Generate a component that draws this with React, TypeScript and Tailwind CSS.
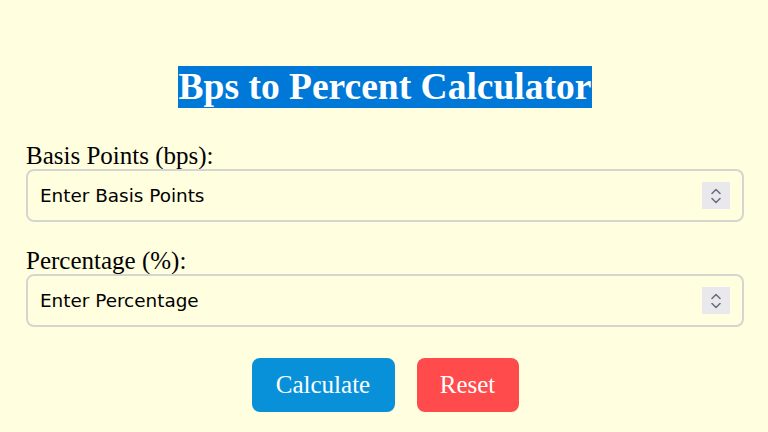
import React from 'react';

const Spinner = () => (
    <div className="w-[28px] h-[27px] bg-[#e9e9ed] flex items-center justify-center shrink-0">
        <svg width="14" height="20" viewBox="0 0 14 20" fill="none" stroke="#6e6e80" strokeWidth="1.6" strokeLinecap="round" strokeLinejoin="round">
            <path d="M3 7.5 L7 3.5 L11 7.5" />
            <path d="M3 12.5 L7 16.5 L11 12.5" />
        </svg>
    </div>
);

const Field = ({ label, placeholder }: { label: string; placeholder: string }) => (
    <div className="flex flex-col">
        <label className="text-[25px] leading-[27px] text-black">{label}</label>
        <div className="flex items-center h-[53px] border-2 border-[#d6d6d0] rounded-[8px] pl-[12px] pr-[12px]">
            <input
                type="text"
                placeholder={placeholder}
                className="flex-1 bg-transparent outline-none text-[18.4px] placeholder:text-black"
                style={{ fontFamily: 'Tahoma, "DejaVu Sans", sans-serif' }}
            />
            <Spinner />
        </div>
    </div>
);

export default function App() {
    return (
        <div className="w-[768px] h-[432px] bg-[#ffffe0] overflow-hidden" style={{ fontFamily: '"Liberation Serif", serif' }}>
            <div className="pl-[26px] pr-[24px] pt-[66px]">
                <div className="flex justify-center">
                    <h1 className="text-[37.5px] font-bold leading-[42px] text-white bg-[#0078d7] px-[1px]">
                        Bps to Percent Calculator
                    </h1>
                </div>
                <div className="mt-[34px] flex flex-col gap-[25px]">
                    <Field label="Basis Points (bps):" placeholder="Enter Basis Points" />
                    <Field label="Percentage (%):" placeholder="Enter Percentage" />
                </div>
                <div className="mt-[31px] flex justify-center gap-[22px]">
                    <button className="w-[143px] h-[54px] rounded-[8px] bg-[#0891d9] text-white text-[25px]">Calculate</button>
                    <button className="w-[102px] h-[54px] rounded-[8px] bg-[#ff4b4b] text-white text-[25px]">Reset</button>
                </div>
            </div>
        </div>
    );
}
